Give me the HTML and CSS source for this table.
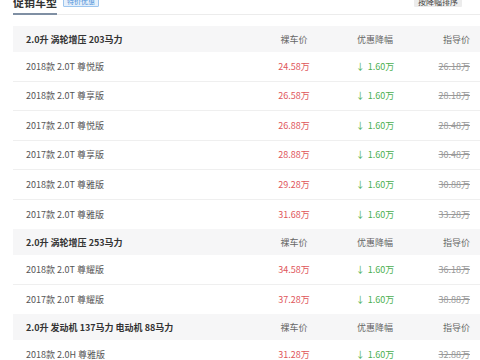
FILE: index.html
```
<!DOCTYPE html>
<html lang="zh-CN">
<head>
<meta charset="utf-8">
<link rel="stylesheet" href="styles.css">
</head>
<body>
<div class="page">
  <div class="tabs">
    <div class="tab-active">促销车型</div>
    <span class="tag">特价优惠</span>
    <span class="sort-btn">按降幅排序</span>
  </div>

  <div class="table">
    <div class="group-head">
      <div class="c-name">2.0升 涡轮增压 203马力</div>
      <div class="c-price">裸车价</div>
      <div class="c-off">优惠降幅</div>
      <div class="c-guide">指导价</div>
    </div>
    <div class="row"><div class="c-name">2018款 2.0T 尊悦版</div><div class="c-price price">24.58万</div><div class="c-off off"><span class="arrow">↓</span>1.60万</div><div class="c-guide guide">26.18万</div></div>
    <div class="row"><div class="c-name">2018款 2.0T 尊享版</div><div class="c-price price">26.58万</div><div class="c-off off"><span class="arrow">↓</span>1.60万</div><div class="c-guide guide">28.18万</div></div>
    <div class="row"><div class="c-name">2017款 2.0T 尊悦版</div><div class="c-price price">26.88万</div><div class="c-off off"><span class="arrow">↓</span>1.60万</div><div class="c-guide guide">28.48万</div></div>
    <div class="row"><div class="c-name">2017款 2.0T 尊享版</div><div class="c-price price">28.88万</div><div class="c-off off"><span class="arrow">↓</span>1.60万</div><div class="c-guide guide">30.48万</div></div>
    <div class="row"><div class="c-name">2018款 2.0T 尊雅版</div><div class="c-price price">29.28万</div><div class="c-off off"><span class="arrow">↓</span>1.60万</div><div class="c-guide guide">30.88万</div></div>
    <div class="row last"><div class="c-name">2017款 2.0T 尊雅版</div><div class="c-price price">31.68万</div><div class="c-off off"><span class="arrow">↓</span>1.60万</div><div class="c-guide guide">33.28万</div></div>

    <div class="group-head">
      <div class="c-name">2.0升 涡轮增压 253马力</div>
      <div class="c-price">裸车价</div>
      <div class="c-off">优惠降幅</div>
      <div class="c-guide">指导价</div>
    </div>
    <div class="row"><div class="c-name">2018款 2.0T 尊耀版</div><div class="c-price price">34.58万</div><div class="c-off off"><span class="arrow">↓</span>1.60万</div><div class="c-guide guide">36.18万</div></div>
    <div class="row last"><div class="c-name">2017款 2.0T 尊耀版</div><div class="c-price price">37.28万</div><div class="c-off off"><span class="arrow">↓</span>1.60万</div><div class="c-guide guide">38.88万</div></div>

    <div class="group-head">
      <div class="c-name">2.0升 发动机 137马力 电动机 88马力</div>
      <div class="c-price">裸车价</div>
      <div class="c-off">优惠降幅</div>
      <div class="c-guide">指导价</div>
    </div>
    <div class="row"><div class="c-name">2018款 2.0H 尊雅版</div><div class="c-price price">31.28万</div><div class="c-off off"><span class="arrow">↓</span>1.60万</div><div class="c-guide guide">32.88万</div></div>
  </div>
</div>
</body>
</html>
```

FILE: styles.css
```
html, body {
  margin: 0;
  padding: 0;
  background: #ffffff;
}

body {
  font-family: "Noto Sans CJK SC", "Noto Sans", sans-serif;
  color: #555;
  overflow: hidden;
}

.page {
  margin-top: -5px;
  padding: 0 10px 0 13px;
}

.tabs {
  display: flex;
  align-items: flex-start;
  border-bottom: 1px solid #ececec;
  margin-right: -10px;
}

.tab-active {
  font-size: 11px;
  line-height: 14px;
  font-weight: 700;
  color: #333;
  padding-bottom: 4px;
  border-bottom: 2px solid #7f8fa3;
  margin-bottom: -1px;
  width: 44px;
  letter-spacing: 0;
}

.tag {
  margin-left: 6px;
  margin-top: 1px;
  font-size: 7px;
  line-height: 9px;
  padding: 0 3px;
  color: #4a90d9;
  background: #e6f0fb;
  border: 1px solid #9cc5ee;
  border-radius: 1px;
}

.sort-btn {
  margin-left: auto;
  margin-right: 18px;
  margin-top: 1px;
  font-size: 8px;
  line-height: 11px;
  padding: 0 4px;
  color: #444;
  background: #ececec;
  border-radius: 1px;
}

.table {
  margin-top: 11px;
}

.group-head,
.row {
  display: grid;
  grid-template-columns: 246px 70px 92px 49px;
  align-items: center;
  font-size: 9px;
}

.group-head {
  height: 26px;
  background: #f6f6f7;
  color: #666;
  margin-right: -10px;
  padding-right: 10px;
}

.row {
  height: 29.5px;
  box-sizing: border-box;
  border-bottom: 1px solid #efefef;
  margin-right: -10px;
  padding-right: 10px;
}

.row.last {
  border-bottom: none;
}

.c-name {
  padding-left: 13px;
  white-space: nowrap;
}

.group-head .c-name {
  font-weight: 700;
  color: #333;
}

.c-price,
.c-off {
  text-align: center;
}

.c-guide {
  text-align: right;
  white-space: nowrap;
}

.price {
  color: #e0565b;
}

.off {
  color: #4caf50;
}

.arrow {
  margin-right: 3px;
}

.guide {
  color: #999;
  text-decoration: line-through;
}
```
